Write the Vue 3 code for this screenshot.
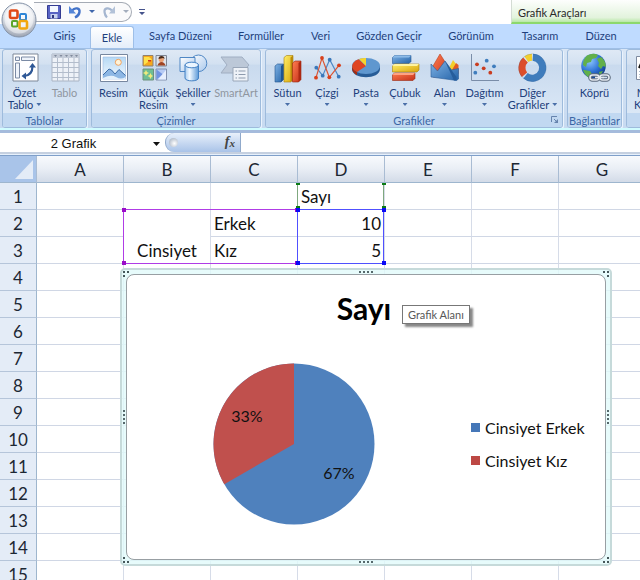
<script setup>
const tabs = ['Giriş', 'Ekle', 'Sayfa Düzeni', 'Formüller', 'Veri', 'Gözden Geçir', 'Görünüm', 'Tasarım', 'Düzen']

const groups = [
  {
    id: 'tables', caption: 'Tablolar',
    items: [
      { icon: 'pivot', lines: ['Özet', 'Tablo'], menu: true },
      { icon: 'table', lines: ['Tablo'], disabled: true },
    ],
  },
  {
    id: 'drawings', caption: 'Çizimler',
    items: [
      { icon: 'picture', lines: ['Resim'] },
      { icon: 'clipart', lines: ['Küçük', 'Resim'] },
      { icon: 'shapes', lines: ['Şekiller'], menu: true },
      { icon: 'smartart', lines: ['SmartArt'], disabled: true },
    ],
  },
  {
    id: 'charts', caption: 'Grafikler', launcher: true,
    items: [
      { icon: 'column', lines: ['Sütun'], menu: true },
      { icon: 'line', lines: ['Çizgi'], menu: true },
      { icon: 'pie', lines: ['Pasta'], menu: true },
      { icon: 'bar', lines: ['Çubuk'], menu: true },
      { icon: 'area', lines: ['Alan'], menu: true },
      { icon: 'scatter', lines: ['Dağıtım'], menu: true },
      { icon: 'donut', lines: ['Diğer', 'Grafikler'], menu: true },
    ],
  },
  { id: 'links', caption: 'Bağlantılar', items: [{ icon: 'link', lines: ['Köprü'] }] },
  { id: 'text', caption: '', items: [{ icon: 'textbox', lines: ['Metin', 'Kutusu'] }] },
]

const columns = ['A', 'B', 'C', 'D', 'E', 'F', 'G']
const rowCount = 15
const cells = {
  D1: { text: 'Sayı' },
  B2: { text: 'Cinsiyet', span: 2, kind: 'merged' },
  C2: { text: 'Erkek' },
  D2: { text: '10', kind: 'number' },
  C3: { text: 'Kız' },
  D3: { text: '5', kind: 'number' },
}
const cellsOf = (row) =>
  columns
    .filter((c) => !(c === 'B' && row === 3))
    .map((c) => ({ key: c + row, text: '', ...cells[c + row] }))

const purple = [[122, 208], [295, 208], [122, 261], [295, 261]]
const blue = [[296, 208], [382, 208], [296, 261], [382, 261]]
const green = [[296, 183], [382, 183], [296, 206], [382, 206]]
const sheetTop = 156
const legend = [
  { name: 'Cinsiyet Erkek', tone: 'blue' },
  { name: 'Cinsiyet Kız', tone: 'red' },
]
</script>

<template>
  <div class="window">
    <svg class="defs" width="0" height="0" aria-hidden="true">
      <defs>
        <linearGradient id="gBlue" x1="0" y1="0" x2="1" y2="1"><stop offset="0" stop-color="#7fb2e4" /><stop offset="1" stop-color="#2463a8" /></linearGradient>
        <linearGradient id="gYellow" x1="0" y1="0" x2="1" y2="1"><stop offset="0" stop-color="#ffee66" /><stop offset="1" stop-color="#d8a50c" /></linearGradient>
        <linearGradient id="gRed" x1="0" y1="0" x2="1" y2="1"><stop offset="0" stop-color="#ff7d50" /><stop offset="1" stop-color="#c4301a" /></linearGradient>
        <linearGradient id="gPale" x1="0" y1="0" x2="1" y2="1"><stop offset="0" stop-color="#ffffff" /><stop offset="1" stop-color="#a9c8ec" /></linearGradient>
        <linearGradient id="gCyl" x1="0" y1="0" x2="1" y2="0"><stop offset="0" stop-color="#a8ccf0" /><stop offset=".35" stop-color="#f2f9ff" /><stop offset="1" stop-color="#5d9ad8" /></linearGradient>
        <linearGradient id="gSky" x1="0" y1="0" x2="0" y2="1"><stop offset="0" stop-color="#b5d8f4" /><stop offset="1" stop-color="#f4faff" /></linearGradient>
        <radialGradient id="gGlobe" cx=".35" cy=".3" r=".75"><stop offset="0" stop-color="#8cc6ff" /><stop offset=".6" stop-color="#2b6fd2" /><stop offset="1" stop-color="#133f8f" /></radialGradient>
        <radialGradient id="gOrb" cx=".5" cy=".25" r=".8"><stop offset="0" stop-color="#ffffff" /><stop offset=".55" stop-color="#e3e6ec" /><stop offset="1" stop-color="#8f98a8" /></radialGradient>
      </defs>
    </svg>

    <button class="office" aria-label="Office">
      <svg width="36" height="36" viewBox="0 0 36 36">
        <circle cx="18" cy="18" r="17" fill="url(#gOrb)" stroke="#8593a8" />
        <circle cx="18" cy="17" r="14.500" fill="#fff" fill-opacity=".45" />
        <g fill="none" stroke-width="2.600">
          <rect x="9" y="8.500" width="7.500" height="7.500" rx="1.500" stroke="#e04a18" />
          <rect x="19" y="12" width="6" height="6" rx="1" stroke="#2f86d6" stroke-width="2" />
          <rect x="11" y="19" width="5.500" height="5.500" rx="1" stroke="#5ba52a" stroke-width="2" />
          <rect x="18.500" y="19" width="7.500" height="7.500" rx="1.500" stroke="#f2a70e" />
        </g>
      </svg>
    </button>

    <header class="titlebar">
      <div class="quick">
        <button aria-label="Kaydet">
          <svg width="14" height="14" viewBox="0 0 14 14"><path d="M.5.5h13v13h-13z" fill="#5964c4" stroke="#343c92" /><path d="M3 1h8v6H3z" fill="#f4f8ff" /><path d="M3.500 9h7v4.500h-7z" fill="#c8d2ee" /><path d="M5 10h2v3H5z" fill="#2e3680" /></svg>
        </button>
        <button aria-label="Geri Al">
          <svg width="14" height="14" viewBox="0 0 14 14"><path d="M4 5.500C7 2 12 3 11.500 7 11.200 9.500 9 11.500 7 12.500" fill="none" stroke="#4272c8" stroke-width="2.400" /><path d="M1 1v7.500h7z" fill="#5586d8" /></svg>
        </button>
        <button aria-label="Geri Al seçenekleri"><svg width="6" height="4" viewBox="0 0 6 4"><path d="M0 0h6L3 3z" fill="#3f66ab" /></svg></button>
        <button aria-label="Yinele">
          <svg width="14" height="14" viewBox="0 0 14 14"><path d="M10 5.500C7 2 2 3 2.500 7 2.800 9.500 4 11.500 5 12.500" fill="none" stroke="#a5b6d0" stroke-width="2.200" /><path d="M13 1v7.500H7z" fill="#b3c2d8" /></svg>
        </button>
        <button aria-label="Yinele seçenekleri"><svg width="6" height="4" viewBox="0 0 6 4"><path d="M0 0h6L3 3z" fill="#a3adbd" /></svg></button>
      </div>
      <button class="customize" aria-label="Araç çubuğunu özelleştir">
        <svg width="6" height="7" viewBox="0 0 6 7"><path d="M0 0h6v1H0zM0 3h6L3 6z" fill="#46548c" /></svg>
      </button>
      <div class="context">Grafik Araçları</div>
    </header>

    <nav class="tabs">
      <button v-for="tab in tabs" :key="tab" class="tab" :class="{ active: tab === 'Ekle' }">{{ tab }}</button>
    </nav>

    <section class="ribbon">
      <div v-for="group in groups" :key="group.id" class="group" :class="group.id">
        <div class="items">
          <button v-for="item in group.items" :key="item.icon" class="item" :disabled="item.disabled">
            <svg class="icon" width="32" height="32" viewBox="0 0 32 32">
              <g v-if="item.icon === 'pivot'">
                <path d="M4 2h25v27H4z" fill="#fff" stroke="#7c8798" />
                <g fill="#eef3fa" stroke="#7a8aa4"><path d="M6.500 5h4v3.500h-4zM12.500 5h13v3.500h-13zM6.500 11h4v15h-4z" /></g>
                <path d="M15 24Q23.500 23.500 23.500 14" fill="none" stroke="#2f5896" stroke-width="2.200" />
                <path d="M20 15.500L23.500 11l3.500 4.500zM17 20.500L12.500 24l4.500 3.500z" fill="#2f5896" />
              </g>
              <g v-else-if="item.icon === 'table'">
                <path d="M3 2h27v27H3z" fill="#eef2f8" stroke="#aab4c4" />
                <path d="M3 2h27v4H3z" fill="#c3cbd8" />
                <path d="M5 3h3L6.500 5zM10.500 3h3L12 5zM16 3h3l-1.500 2zM21 3h3l-1.500 2zM26 3h3l-1.500 2z" fill="#7f8a9c" />
                <path d="M3 10.500h27M3 15.500h27M3 20.500h27M3 25.500h27M8.500 6v23M14 6v23M19.500 6v23M25 6v23" stroke="#b3bdcc" />
              </g>
              <g v-else-if="item.icon === 'picture'">
                <path d="M2.500 2.500h27v27h-27z" fill="#fff" stroke="#77879f" />
                <path d="M5 5h22.500v22H5z" fill="url(#gSky)" stroke="#9dbbe0" stroke-width=".6" />
                <circle cx="20.300" cy="10.300" r="3" fill="#fff3d8" stroke="#f0a35e" />
                <path d="M5 23l6-6 2.500 1 3.500 4 4-4.500 6.500 6V27H5z" fill="#8db7e4" />
                <path d="M5 23l6-6 2.500 1 3.500 4 4-4.500 6.500 6" fill="none" stroke="#3d6da8" />
                <path d="M5 26q8-4 13-1t9.500 0v2H5z" fill="#e3f0fb" />
              </g>
              <g v-else-if="item.icon === 'clipart'">
                <path d="M5 3.500h10v10.500H5z" fill="#f7a81c" stroke="#8f8170" /><path d="M6 5h5l3 2.500-4 2.500-4 3z" fill="#ffe14a" /><path d="M10 8h3v1.500h-3z" fill="#d3371c" />
                <path d="M18 3.500h10.500v10.500H18z" fill="#dfe3ea" stroke="#7e8694" /><circle cx="23.300" cy="7.500" r="2.600" fill="#eaa276" /><path d="M20.500 7q0-3 3-3t3 3l-1.500-1z" fill="#4a2a18" /><path d="M19.500 13.500q1-3.500 4-3.500t4 3.500z" fill="#a14422" />
                <path d="M5 17h10.500v11H5z" fill="#6fbe94" stroke="#6d907c" /><path d="M8 18l1 2 2 1-2 1-1 2-1-2-2-1 2-1zM12.500 21l1 2 1.500 1-1.500 1-1 2-1-2-2-1 2-1z" fill="#f0eb7c" />
                <path d="M18 17h10.500v11H18z" fill="#b7cbf4" stroke="#8391ae" /><path d="M18.500 17.500l6.500 5-6.500 5z" fill="#7194e0" /><path d="M28 18v9.500h-8z" fill="#e7effd" />
              </g>
              <g v-else-if="item.icon === 'shapes'">
                <circle cx="21.500" cy="11.300" r="8.300" fill="url(#gPale)" stroke="#4f87c4" />
                <path d="M3 5.500h15v14H3z" fill="url(#gPale)" stroke="#4f87c4" />
                <path d="M8 13v13c0 3.800 13.500 3.800 13.500 0V13z" fill="url(#gCyl)" stroke="#4381c4" />
                <ellipse cx="14.750" cy="13" rx="6.750" ry="2.800" fill="#eaf5ff" stroke="#4381c4" />
              </g>
              <g v-else-if="item.icon === 'smartart'">
                <path d="M1 5h21l7 8-7 8H1l6-8z" fill="#bcc8d8" stroke="#a0aec2" />
                <path d="M13 15.500h15V29H13z" fill="#eef2f8" stroke="#99a6b8" />
                <path d="M15.500 19h1.500M18.500 19h7M15.500 22.500h1.500M18.500 22.500h7M15.500 26h1.500M18.500 26h7" stroke="#8d9aad" />
              </g>
              <g v-else-if="item.icon === 'column'">
                <path d="M3 14l2.500-2h6v15.500L9 30H3z" fill="url(#gBlue)" stroke="#24558f" stroke-width=".6" /><path d="M9 14l2.500-2v15.500L9 30z" fill="#1f5592" />
                <path d="M12 5.500L14.500 3.500H21V28l-2.500 2H12z" fill="url(#gYellow)" stroke="#a57c0c" stroke-width=".6" /><path d="M18.500 5.500L21 3.500V28l-2.500 2z" fill="#b98a0a" />
                <path d="M20.500 11L23 9h6v18.500L26.500 30h-6z" fill="url(#gRed)" stroke="#97260f" stroke-width=".6" /><path d="M26.500 11L29 9v18.500L26.500 30z" fill="#ab2812" />
              </g>
              <g v-else-if="item.icon === 'line'">
                <path d="M5.300 15.700l6.400 8 7-16 9 17" fill="none" stroke="#4e88c6" stroke-width="1.200" />
                <path d="M5 25.700L11 6l7.300 19.300L28 13.300" fill="none" stroke="#dc5634" stroke-width="1.200" />
                <g fill="#3a78ba"><circle cx="5.300" cy="15.700" r="1.900" /><circle cx="11.700" cy="23.700" r="1.900" /><circle cx="18.700" cy="7.700" r="1.900" /><circle cx="27.700" cy="24.700" r="1.900" /></g>
                <g fill="#d8401c"><circle cx="5" cy="25.700" r="1.900" /><circle cx="11" cy="6" r="1.900" /><circle cx="18.300" cy="25.300" r="1.900" /><circle cx="28" cy="13.300" r="1.900" /></g>
              </g>
              <g v-else-if="item.icon === 'pie'">
                <path d="M2 14v3c0 11 28 11 28 0v-3z" fill="#275c97" />
                <ellipse cx="16" cy="14" rx="14" ry="8" fill="#5f97cf" />
                <path d="M16 14L7 20.100C0 17 .5 10.500 8.500 7.200z" fill="#df4522" />
                <path d="M2 14v3q1 4 5 6v-3q-5-2.500-5-6z" fill="#a52d12" />
                <path d="M16 14L9 7q3.500-1.200 7-1z" fill="#f7d52c" />
              </g>
              <g v-else-if="item.icon === 'bar'">
                <path d="M3.500 5.500l2-2H22v6l-2 2H3.500z" fill="url(#gBlue)" stroke="#2a5a95" stroke-width=".6" /><path d="M3.500 5.500l2-2H22l-2 2z" fill="#8dbbe8" />
                <path d="M3.500 14l2-2H30v6l-2 2H3.500z" fill="url(#gYellow)" stroke="#a8800c" stroke-width=".6" /><path d="M3.500 14l2-2H30l-2 2z" fill="#fff3a0" />
                <path d="M3.500 23l2-2H26v5.500l-2 2H3.500z" fill="url(#gRed)" stroke="#9a2a12" stroke-width=".6" /><path d="M3.500 23l2-2H26l-2 2z" fill="#ffa282" />
              </g>
              <g v-else-if="item.icon === 'area'">
                <path d="M4 14l7-12 9 14-2 9H4z" fill="url(#gRed)" stroke="#b8401c" stroke-width=".6" />
                <path d="M19 18l5-10 3 4v10z" fill="#f3cf2c" /><path d="M23 18l4-7 2.500 2v9z" fill="#e15a22" />
                <path d="M2 12l6.500 7L16 9l6.500 9 7-1.500V27l-2 1.500L2 25z" fill="url(#gBlue)" stroke="#285c98" stroke-width=".6" />
                <path d="M16 9l11.500 16v3.500H25z" fill="#265d9c" />
              </g>
              <g v-else-if="item.icon === 'scatter'">
                <path d="M2.500 2v26.500H30" fill="none" stroke="#7a8da8" />
                <g fill="#c93c1f"><circle cx="8" cy="12.300" r="1.900" /><circle cx="14.700" cy="16.300" r="1.900" /><circle cx="21.300" cy="20.700" r="1.900" /></g>
                <g fill="#3f7dbd"><circle cx="17.700" cy="8.700" r="1.900" /><circle cx="25" cy="14.300" r="1.900" /><circle cx="6.300" cy="20.700" r="1.900" /></g>
              </g>
              <g v-else-if="item.icon === 'donut'" fill="none" stroke-width="7">
                <path d="M15.800 5.200A10.500 10.500 0 1 1 8.500 23.800" stroke="#3f7cbc" />
                <path d="M7.500 22.700A10.500 10.500 0 0 1 8.500 8" stroke="#dc4e2a" />
                <path d="M9.300 7.100A10.500 10.500 0 0 1 15 5.200" stroke="#f2cf2f" />
                <circle cx="15.500" cy="15.700" r="13.800" stroke="#2a5688" stroke-opacity=".3" stroke-width=".7" />
              </g>
              <g v-else-if="item.icon === 'link'">
                <circle cx="14.500" cy="14" r="12.300" fill="url(#gGlobe)" />
                <path d="M8 3.500q6-3 11-.5l-2 3-4 1-1 3-4 1-1 4-3-2q0-6 4-9.500zM18 7l4-2q5 4 4.800 10L24 14l-2 3-3-3 1-3zM5 18l6 1 2 3-2 4q-5-2-7-8zM20 20l4-1-3 5z" fill="#62b04a" />
                <g fill="none" stroke="#5d6b7d" stroke-width="3.600"><rect x="11" y="23" width="9" height="5" rx="2.500" /><rect x="21" y="23" width="9" height="5" rx="2.500" /></g>
                <g fill="none" stroke="#e2e7ee" stroke-width="1.600"><rect x="11" y="23" width="9" height="5" rx="2.500" /><rect x="21" y="23" width="9" height="5" rx="2.500" /><path d="M16 25.500h9" /></g>
              </g>
              <g v-else>
                <path d="M1.500 4.500h27v23h-27z" fill="#fff" stroke="#7e8ba0" />
                <path d="M4 16l4-9 4 9M5.500 13h5" fill="none" stroke="#111" stroke-width="2" />
                <path d="M4 19.500h21M4 22.500h21M4 25h21M15 9h10M15 12h10M15 15h10" stroke="#a9b6c8" />
              </g>
            </svg>
            <span v-for="(line, i) in item.lines" :key="line" class="line">
              {{ line }}<i v-if="item.menu && i === 1" class="caret"></i>
            </span>
            <i v-if="item.menu && item.lines.length === 1" class="caret below"></i>
          </button>
        </div>
        <div class="caption">
          <span>{{ group.caption }}</span>
          <button v-if="group.launcher" class="launcher" aria-label="Grafik seçenekleri">
            <svg width="7" height="7" viewBox="0 0 7 7"><path d="M.5 6V.5H6M3 3l3 3" fill="none" stroke="#6583ad" /><path d="M7 3v4H3z" fill="#6583ad" /></svg>
          </button>
        </div>
      </div>
    </section>

    <section class="formula">
      <input class="namebox" value="2 Grafik" aria-label="Ad Kutusu" />
      <button class="drop" aria-label="Adları göster"><svg width="7" height="4" viewBox="0 0 7 4"><path d="M0 0h7L3.500 4z" fill="#111" /></svg></button>
      <div class="fxbar">
        <i class="knob"></i>
        <button class="fx" aria-label="İşlev Ekle"><i>f</i><sub>x</sub></button>
      </div>
      <input class="entry" value="" aria-label="Formül Çubuğu" />
    </section>

    <main class="sheet">
      <table>
        <colgroup><col class="rowcol" /><col v-for="c in columns" :key="c" class="datacol" /></colgroup>
        <thead>
          <tr>
            <th class="corner"><svg width="18" height="19" viewBox="0 0 18 19"><path d="M18 0v19H0z" fill="#e4ecf7" /></svg></th>
            <th v-for="c in columns" :key="c" scope="col">{{ c }}</th>
          </tr>
        </thead>
        <tbody>
          <tr v-for="r in rowCount" :key="r">
            <th scope="row">{{ r }}</th>
            <td v-for="cell in cellsOf(r)" :key="cell.key" :rowspan="cell.span || 1" :class="cell.kind">{{ cell.text }}</td>
          </tr>
        </tbody>
      </table>

      <svg class="ranges" width="400" height="120" :viewBox="`0 ${sheetTop} 400 120`" aria-hidden="true">
        <g fill="none">
          <path d="M297.500 183v26M383.500 183v26" stroke="#7fa87f" />
          <path d="M123.500 209.500h174v54h-174z" stroke="#b03ce6" />
          <path d="M297.500 209.500h86v54h-86z" stroke="#5050ff" />
        </g>
        <rect v-for="([x, y], i) in green" :key="'g' + i" :x="x" :y="y" width="4" height="2" fill="#0a7a14" />
        <rect v-for="([x, y], i) in purple" :key="'p' + i" :x="x" :y="y" width="4" height="4" fill="#9a0cc8" />
        <rect v-for="([x, y], i) in blue" :key="'b' + i" :x="x" :y="y" width="4" height="4" fill="#0a0af5" />
      </svg>

      <figure class="chart">
        <i class="grip top"></i><i class="grip bottom"></i><i class="grip left"></i><i class="grip right"></i>
        <i class="dot nw"></i><i class="dot ne"></i><i class="dot sw"></i><i class="dot se"></i>
        <div class="plot">
          <h1>Sayı</h1>
          <div class="body">
            <svg width="162" height="162" viewBox="-81 -81 162 162">
              <circle r="80.500" fill="#4f81bd" />
              <path d="M0 0V-80.500A80.500 80.500 0 0 0 -69.700 40.250z" fill="#c0504d" />
              <text x="-47" y="-22">33%</text>
              <text x="45" y="35">67%</text>
            </svg>
            <ul class="legend">
              <li v-for="entry in legend" :key="entry.name"><i :class="entry.tone"></i>{{ entry.name }}</li>
            </ul>
          </div>
        </div>
        <div class="tip" role="tooltip">Grafik Alanı</div>
      </figure>
    </main>
  </div>
</template>

<style>
body { margin: 0; overflow: hidden; }
</style>

<style scoped>
* { box-sizing: border-box; }
button { padding: 0; border: 0; background: none; font: inherit; color: inherit; }
svg { display: block; }
.window { position: relative; display: flex; flex-direction: column; height: 100vh; overflow: hidden; background: #fff; font-family: Lato, "Open Sans", sans-serif; font-size: 11px; color: #1e3f7c; }
.defs { position: absolute; }
.office { position: absolute; left: 1px; top: 2px; z-index: 2; }

.titlebar { display: flex; align-items: stretch; flex: none; height: 24px; }
.quick { display: flex; align-items: center; gap: 7px; width: 98px; margin: 2px 0 2px 34px; padding-left: 13px; border: 1px solid #a5abb5; border-left: 0; border-radius: 0 11px 11px 0; background: #fafafb; }
.customize { margin-left: 7px; align-self: center; }
.context { flex: none; width: calc(100% - 511px); margin-left: auto; padding-left: 6px; border-left: 1px solid #d4dcd4; border-bottom: 2px solid #8cd86c; background: linear-gradient(#fdfefd, #e2f3dc 80%, #b9e8a6); line-height: 25px; color: #2a2a2a; }

.tabs { display: grid; flex: none; grid-template-columns: 47px 48px 89px 72px 47px 90px 74px 64px 58px; height: 24px; padding-left: 41px; background: #bfdbff; }
.tab { line-height: 24px; white-space: nowrap; }
.tab.active { margin: 2px 2px 0; line-height: 20px; border: 1px solid #9ebfe8; border-bottom: 0; border-radius: 3px 3px 0 0; background: linear-gradient(#fff, #e4eefa); }

.ribbon { display: flex; flex: none; gap: 4px; height: 82px; padding: 0 0 0 2px; overflow: hidden; border-top: 1px solid #9fbfe6; border-bottom: 2px solid #d0fcff; background: linear-gradient(#d9e6f5, #c7daf1); }
.group { display: flex; flex: none; flex-direction: column; border: 1px solid #9ebbdc; border-radius: 3px; background: linear-gradient(#dfe9f5, #d3e1f1 18%, #c9daee 20%, #dfebf8); box-shadow: 1px 1px 0 #eaf3fd; overflow: hidden; }
.tables { width: 85px; }
.drawings { width: 170px; }
.charts { width: 298px; }
.links { width: 55px; }
.text { width: 50px; }
.items { display: grid; flex: 1; min-height: 0; justify-content: center; }
.tables .items { grid-template-columns: 40px 40px; }
.drawings .items { grid-template-columns: 41px 39px 40px 46px; }
.charts .items { grid-template-columns: 40px 39px 39px 39px 40px 40px 56px; }
.item { display: flex; flex-direction: column; align-items: center; padding-top: 2px; }
.icon { flex: none; margin-bottom: 3px; }
.line { line-height: 12px; white-space: nowrap; }
.item:disabled { color: #8f969f; }
.caret { display: inline-block; width: 5px; height: 3px; margin-left: 3px; background: #4a6fa8; clip-path: polygon(0 0, 100% 0, 50% 100%); vertical-align: 3px; }
.below { margin: 4px 0 0; }
.caption { display: flex; flex: none; position: relative; align-items: center; justify-content: center; height: 14px; background: #c1d8f1; color: #3a66a5; white-space: nowrap; }
.launcher { position: absolute; right: 4px; top: 3px; }

.formula { display: flex; flex: none; height: 25px; border-top: 3px solid #a5bbdc; border-bottom: 1px solid #e6f0fc; background: #fff; box-shadow: inset 0 -2px 0 #c5d0e0; }
.formula input { min-width: 0; padding: 0; border: 0; outline: 0; background: none; font: 13px "Liberation Sans", sans-serif; color: #111; }
.namebox { width: 147px; text-align: center; }
.drop { width: 18px; display: flex; align-items: center; justify-content: center; }
.fxbar { display: flex; align-items: center; justify-content: space-between; width: 76px; height: 19px; padding: 0 5px 0 3px; border-right: 1px solid #90a9cb; border-left: 1px solid #90a9cb; border-radius: 9px 0 0 9px; background: linear-gradient(#e8f0fb, #a9c3e8); }
.knob { width: 9px; height: 9px; border-radius: 50%; background: radial-gradient(circle at 60% 60%, #fff, #9aa7b9); }
.fx { font: bold 14px/16px "Liberation Serif", serif; color: #444; }
.fx sub { font-size: 11px; font-style: italic; vertical-align: -1px; }
.formula .entry { flex: 1; }

.sheet { position: relative; flex: 1; min-height: 0; overflow: hidden; border-top: 1px solid #7f9fc9; font-family: Lato, sans-serif; font-size: 17px; color: #111; }
table { table-layout: fixed; width: 646px; border-collapse: separate; border-spacing: 0; }
.rowcol { width: 37px; }
.datacol { width: 87px; }
th, td { height: 27px; padding: 2px 3px 0; border-right: 1px solid #d6dce8; border-bottom: 1px solid #d0d7e5; line-height: 24px; font-weight: 400; text-align: left; white-space: nowrap; }
th { border-color: #9eb6ce; background: #e4ecf7; text-align: center; color: #1c2734; }
thead th { background: linear-gradient(#f8fafd, #e9eef5 50%, #d3dbe8); border-right-color: #a9bcd3; }
tbody th { border-bottom-color: #b5c5da; }
thead .corner { padding: 3px 3px 3px 15px; background: #a9c4e9; }
.merged { text-align: center; vertical-align: bottom; }
.number { text-align: right; }
.ranges { position: absolute; left: 0; top: 0; }

.chart { position: absolute; left: 120px; top: 112px; width: 492px; height: 298px; margin: 0; padding: 4px; border: 2px solid #c6dada; border-radius: 5px; background: rgba(225, 250, 250, .8); }
.plot { display: flex; flex-direction: column; height: 100%; border: 1px solid #989fa3; border-radius: 8px; background: #fff; }
h1 { margin: 0; padding: 13px 4px 0 0; height: 88px; font-size: 30px; line-height: 40px; font-weight: 700; text-align: center; color: #000; }
.body { display: flex; align-items: center; gap: 96px; padding-left: 86px; }
.body text { font-size: 16px; text-anchor: middle; fill: #111; }
.legend { display: flex; flex-direction: column; gap: 9px; margin: 0; padding: 0; list-style: none; font-size: 16px; }
.legend li { display: flex; align-items: center; gap: 5px; line-height: 24px; white-space: nowrap; }
.legend i { width: 9px; height: 9px; }
.blue { background: #4577b8; }
.red { background: #bd4844; }
.tip { position: absolute; left: 280px; top: 35px; height: 19px; padding: 0 5px; border: 1px solid #777; background: #fff; box-shadow: 3px 3px 2px #888; font-size: 11px; line-height: 17px; color: #575757; white-space: nowrap; }
.grip { position: absolute; width: 14px; height: 2px; background: repeating-linear-gradient(90deg, #56696c 0 2px, transparent 2px 4px); }
.top { left: 237px; top: 1px; }
.bottom { left: 237px; bottom: 1px; }
.left, .right { top: 140px; width: 2px; height: 14px; background: repeating-linear-gradient(#56696c 0 2px, transparent 2px 4px); }
.left { left: 1px; }
.right { right: 1px; }
.dot { position: absolute; width: 2px; height: 2px; background: #45575a; }
.nw { left: 1px; top: 1px; box-shadow: 4px 0 #45575a, 0 4px #45575a; }
.ne { right: 1px; top: 1px; box-shadow: -4px 0 #45575a, 0 4px #45575a; }
.sw { left: 1px; bottom: 1px; box-shadow: 4px 0 #45575a, 0 -4px #45575a; }
.se { right: 1px; bottom: 1px; box-shadow: -4px 0 #45575a, 0 -4px #45575a; }
</style>
